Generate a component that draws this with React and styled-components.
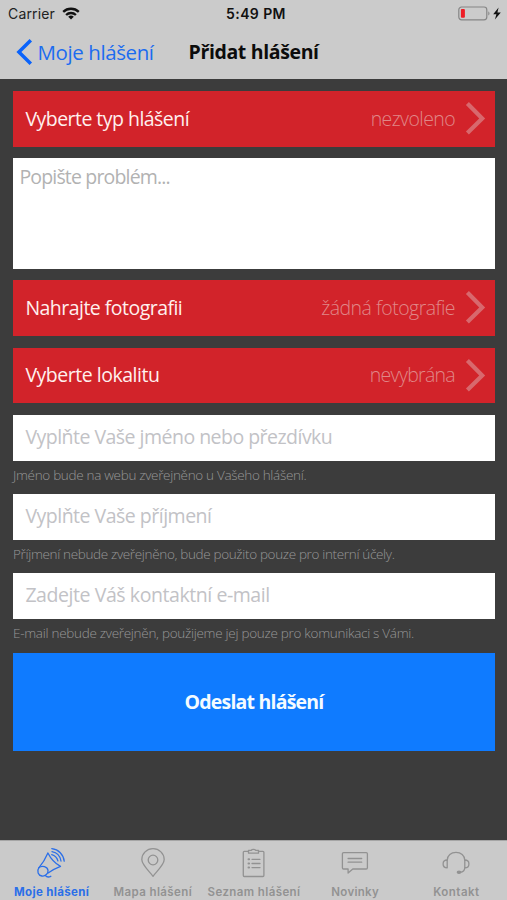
import React from "react";
import styled, { createGlobalStyle } from "styled-components";

const GlobalStyle = createGlobalStyle`
    * {
        box-sizing: border-box;
    }
    body {
        margin: 0;
        background: #3c3c3c;
    }
    button, input, textarea {
        font: inherit;
        border: 0;
        border-radius: 0;
        padding: 0;
        background: none;
    }
`;

const Screen = styled.div`
    width: 507px;
    height: 900px;
    display: flex;
    flex-direction: column;
    overflow: hidden;
    background: #3c3c3c;
    font-family: "Open Sans", "Noto Sans", sans-serif;
`;

const Header = styled.header`
    height: 79px;
    background: #cbcbcb;
`;

const StatusBar = styled.div`
    height: 27px;
    padding: 0 5px 0 8px;
    display: grid;
    grid-template-columns: 1fr auto 1fr;
    align-items: center;
    font-family: Inter, sans-serif;
    font-size: 14px;
    color: #222;
`;

const Carrier = styled.div`
    display: flex;
    align-items: center;
    gap: 7px;
    letter-spacing: 0.15px;
`;

const Clock = styled.div`
    padding-left: 2px;
    font-weight: 600;
    color: #111;
    letter-spacing: 0.4px;
`;

const Battery = styled.div`
    display: flex;
    justify-content: flex-end;
`;

const NavBar = styled.div`
    height: 50px;
    padding-left: 16px;
    display: flex;
    align-items: center;
`;

const BackButton = styled.button`
    width: 172.5px;
    display: flex;
    align-items: center;
    gap: 4.5px;
    font-size: 20.5px;
    line-height: 28px;
    letter-spacing: ${(p) => p.$track}px;
    white-space: nowrap;
    color: #1c6cf0;
`;

const Title = styled.h1`
    margin: 0;
    font-size: 19.5px;
    line-height: 28px;
    font-weight: 700;
    letter-spacing: ${(p) => p.$track}px;
    white-space: nowrap;
    color: #0c0c0c;
`;

const Form = styled.main`
    flex: 1;
    padding: 12px 12px 0 13px;
    display: flex;
    flex-direction: column;
`;

const PickerRow = styled.button`
    width: 100%;
    height: ${(p) => p.$height}px;
    margin-bottom: ${(p) => p.$gap}px;
    padding: 0 9px 2px 12.4px;
    display: flex;
    align-items: center;
    background: #d2232a;
    font-size: 19.5px;
    white-space: nowrap;
`;

const PickerLabel = styled.span`
    flex: 1;
    text-align: left;
    color: #fff0ee;
    letter-spacing: ${(p) => p.$track}px;
`;

const PickerValue = styled.span`
    margin-right: 10px;
    font-weight: 300;
    color: #e08788;
    letter-spacing: ${(p) => p.$track}px;
`;

const Description = styled.textarea`
    display: block;
    height: 111px;
    margin-bottom: 11px;
    padding: 5px 6.4px;
    background: #fff;
    resize: none;
    outline: none;
    font-size: 19.5px;
    line-height: 27px;
    letter-spacing: ${(p) => p.$track}px;
    &::placeholder {
        color: #b2b2b2;
        opacity: 1;
    }
`;

const Field = styled.input`
    height: 46px;
    padding: 0 12.4px 3px;
    background: #fff;
    outline: none;
    font-size: 19.5px;
    letter-spacing: ${(p) => p.$track}px;
    &::placeholder {
        color: #c2c2c6;
        opacity: 1;
    }
`;

const Hint = styled.p`
    height: ${(p) => p.$height}px;
    margin: 0;
    padding-top: 5px;
    font-size: 13.5px;
    line-height: 19px;
    font-weight: 300;
    letter-spacing: ${(p) => p.$track}px;
    white-space: nowrap;
    color: #979797;
`;

const SubmitButton = styled.button`
    height: 98px;
    padding-bottom: 2px;
    background: #0f7bff;
    color: #f4fbff;
    font-size: 19.5px;
    font-weight: 700;
    letter-spacing: ${(p) => p.$track}px;
`;

const TabBar = styled.nav`
    height: 60px;
    padding-left: 1px;
    display: grid;
    grid-template-columns: repeat(5, 1fr);
    background: #cacaca;
    border-top: 1px solid #a5a5a5;
`;

const Tab = styled.a`
    display: flex;
    flex-direction: column;
    align-items: center;
    padding-top: 6px;
    font-family: Inter, sans-serif;
    font-size: 11.5px;
    line-height: 14px;
    font-weight: ${(p) => (p.$active ? 700 : 600)};
    letter-spacing: ${(p) => p.$track}px;
    white-space: nowrap;
    color: ${(p) => (p.$active ? "#2b6fe8" : "#929292")};
`;

const TabIcon = styled.svg`
    width: 32px;
    height: 32px;
    margin-bottom: 6px;
    fill: none;
    stroke: currentColor;
    stroke-width: 1.3;
    stroke-linecap: round;
    stroke-linejoin: round;
`;

const WifiIcon = () => (
    <svg width="18" height="13" viewBox="0 0 18 13" fill="none" stroke="#111" strokeWidth="2.3">
        <path d="M1.2 4.9a11.2 11.2 0 0 1 15.6 0" />
        <path d="M4.1 8a7 7 0 0 1 9.8 0" />
        <path d="M9 12.6 6.2 9.8a4 4 0 0 1 5.6 0Z" fill="#111" stroke="none" />
    </svg>
);

const BatteryIcon = () => (
    <svg width="44" height="15" viewBox="0 0 44 15">
        <rect x="0.8" y="1" width="28" height="12.8" rx="2.8" fill="none" stroke="#858585" strokeWidth="1.2" />
        <rect x="2.9" y="3" width="4" height="8.8" rx="1" fill="#ee1c25" />
        <path d="M30.3 5.2c1.6.8 1.6 3.6 0 4.4Z" fill="#858585" />
        <path d="M40.6 1.5 35.2 8.3h3.2l-1.5 5.2 5.9-7h-3.4Z" fill="#111" />
    </svg>
);

const BackIcon = () => (
    <svg width="17" height="28" viewBox="0 0 17 28" fill="none" stroke="#0a63fb" strokeWidth="3.5">
        <path d="M14.8 2.2 2.9 14l11.9 11.8" />
    </svg>
);

const ChevronIcon = () => (
    <svg width="21" height="34" viewBox="0 0 21 34" fill="none" stroke="#d8686d" strokeWidth="4.2">
        <path d="m2.4 2.6 14.8 14.8L2.4 32" />
    </svg>
);

const MegaphoneIcon = () => (
    <>
        <path d="M11.9 6c2.8 5.6 7.1 10.4 12.6 13.4-4.4 1.7-8.6 3.9-12.4 6.6M11.9 6C9.7 11.2 6.6 16.4 2.8 20.8" />
        <path d="M2.8 20.8c-2.3 3.2-.6 7.7 3.1 8.2 3.5.5 6.5-2.4 6.1-5.6-.5-3.7-5.9-5.3-9.2-2.6Z" />
        <path d="M9.2 28.4c1.4 1.7 3.7 1.9 5.6.9" />
        <path d="M15.7 7.6c3 .8 5.4 3.2 6.2 6.3M16 4.7c4.8.9 8.2 4.5 9 9.3M15.8 1.7c6.8.8 11.7 5.8 12.4 12.5" />
    </>
);

const PinIcon = () => (
    <>
        <path d="M16 29.3C12.8 24.8 4.8 18 4.8 12.6a11.2 10.9 0 0 1 22.4 0C27.2 18 19.2 24.8 16 29.3Z" />
        <circle cx="16" cy="13" r="4.8" />
    </>
);

const ClipboardIcon = () => (
    <>
        <path d="M10.5 4.3H6.3q-1 0-1 1v23.2q0 1 1 1h18.6q1 0 1-1V5.3q0-1-1-1h-4.4" />
        <path d="M10.5 6.2V3.4h2.7q.4-1 2.3-1t2.3 1h2.7v2.8Z" />
        <path d="M14 12.3h8M14 16.5h8M14 20.6h8" />
        <path d="M10.5 12.3h.6M10.5 16.5h.6M10.5 20.6h.6" strokeWidth="2" />
    </>
);

const ChatIcon = () => (
    <>
        <path d="M4.6 5.6h22.6q1.2 0 1.2 1.2v14q0 1.2-1.2 1.2H13.8l-4.7 4V22H4.6q-1.2 0-1.2-1.2v-14Q3.4 5.6 4.6 5.6Z" />
        <path d="M9.1 11.5h13.6M9.1 15.2h13.6" />
    </>
);

const HeadsetIcon = () => (
    <>
        <path d="M7.2 13.2C7.4 8.6 11 5.4 16 5.4s8.6 3.2 8.8 7.8" />
        <path d="M7.2 13v7.8c-2.5 0-4.1-1.6-4.1-3.9S4.7 13 7.2 13ZM24.8 13v7.8c2.5 0 4.1-1.6 4.1-3.9S27.3 13 24.8 13Z" />
        <path d="M24.8 20.8c-.2 2.7-1.9 4.3-4.6 4.6" />
        <ellipse cx="19" cy="25.3" rx="1.7" ry="1.1" fill="currentColor" />
    </>
);

const tabs = [
    { label: "Moje hlášení", Icon: MegaphoneIcon, active: true, track: 0.35 },
    { label: "Mapa hlášení", Icon: PinIcon, track: 0.4 },
    { label: "Seznam hlášení", Icon: ClipboardIcon, track: 0.4 },
    { label: "Novinky", Icon: ChatIcon, track: 0.3 },
    { label: "Kontakt", Icon: HeadsetIcon, track: 0.5 },
];

const Picker = ({ label, value, height = 56, gap, track = 0, valueTrack = 0 }) => (
    <PickerRow $height={height} $gap={gap}>
        <PickerLabel $track={track}>{label}</PickerLabel>
        <PickerValue $track={valueTrack}>{value}</PickerValue>
        <ChevronIcon />
    </PickerRow>
);

const App = () => (
    <>
        <GlobalStyle />
        <Screen>
            <Header>
                <StatusBar>
                    <Carrier>
                        Carrier
                        <WifiIcon />
                    </Carrier>
                    <Clock>5:49 PM</Clock>
                    <Battery>
                        <BatteryIcon />
                    </Battery>
                </StatusBar>
                <NavBar>
                    <BackButton $track={-0.4}>
                        <BackIcon />
                        Moje hlášení
                    </BackButton>
                    <Title $track={-0.36}>Přidat hlášení</Title>
                </NavBar>
            </Header>

            <Form>
                <Picker label="Vyberte typ hlášení" value="nezvoleno" gap={11} track={-0.53} valueTrack={-0.6} />
                <Description placeholder="Popište problém..." $track={-0.83} />
                <Picker
                    label="Nahrajte fotografii"
                    value="žádná fotografie"
                    gap={12}
                    track={-0.53}
                    valueTrack={-0.52}
                />
                <Picker
                    label="Vyberte lokalitu"
                    value="nevybrána"
                    height={55}
                    gap={12}
                    track={-0.48}
                    valueTrack={-0.7}
                />

                <Field placeholder="Vyplňte Vaše jméno nebo přezdívku" $track={-0.52} />
                <Hint $height={33} $track={-0.32}>
                    Jméno bude na webu zveřejněno u Vašeho hlášení.
                </Hint>
                <Field placeholder="Vyplňte Vaše příjmení" $track={-0.5} />
                <Hint $height={33} $track={-0.34}>
                    Příjmení nebude zveřejněno, bude použito pouze pro interní účely.
                </Hint>
                <Field placeholder="Zadejte Váš kontaktní e-mail" $track={-0.43} />
                <Hint $height={34} $track={-0.29}>
                    E-mail nebude zveřejněn, použijeme jej pouze pro komunikaci s Vámi.
                </Hint>
                <SubmitButton $track={-0.8}>Odeslat hlášení</SubmitButton>
            </Form>

            <TabBar>
                {tabs.map(({ label, Icon, active, track }) => (
                    <Tab key={label} $active={active} $track={track}>
                        <TabIcon viewBox="0 0 32 32">
                            <Icon />
                        </TabIcon>
                        {label}
                    </Tab>
                ))}
            </TabBar>
        </Screen>
    </>
);

export default App;
